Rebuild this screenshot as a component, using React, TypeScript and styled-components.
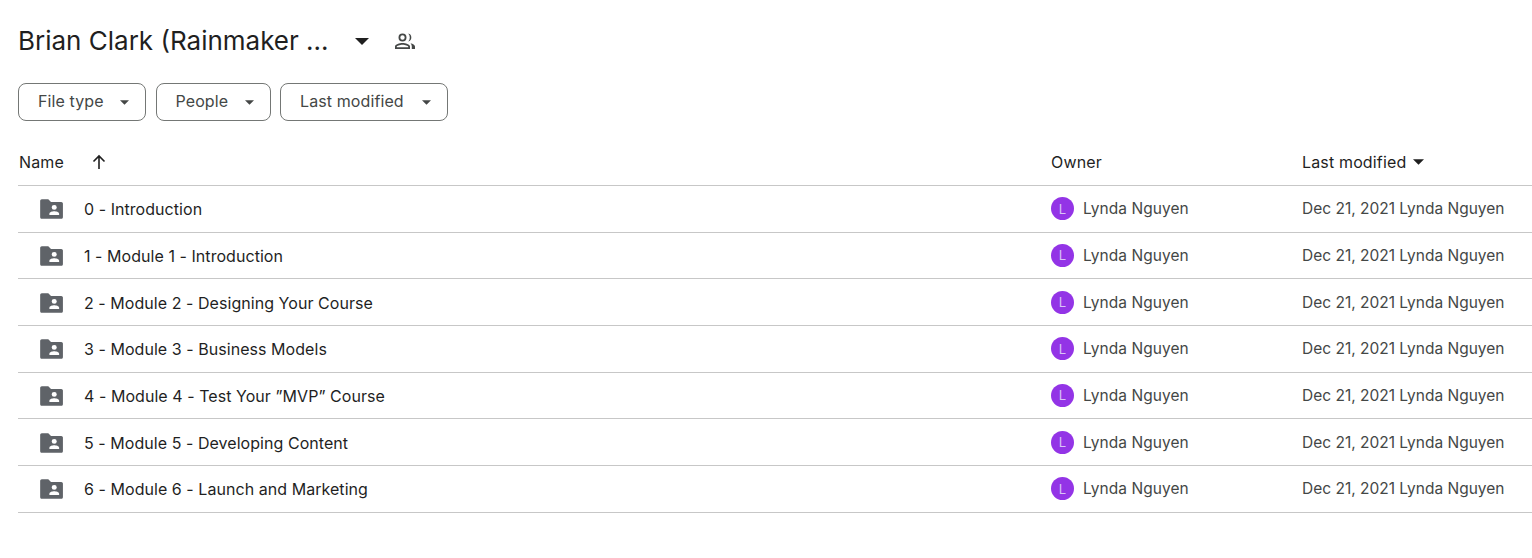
import React from "react";
import styled, { createGlobalStyle } from "styled-components";

const Global = createGlobalStyle`
  html, body { margin: 0; padding: 0; background: #fff; }
  body { font-family: Inter, Roboto, "Noto Sans", sans-serif; }
`;

const Page = styled.div`
  width: 1532px;
  height: 558px;
  box-sizing: border-box;
  padding: 18px 0 0 18px;
  overflow: hidden;
`;

const TitleBar = styled.div`
  display: flex;
  align-items: center;
  height: 46px;
`;

const Title = styled.h1`
  margin: 0;
  width: 337px;
  font-size: 26px;
  line-height: 46px;
  font-weight: 400;
  color: #1f1f1f;
  white-space: nowrap;
`;

const TitleCaret = styled.svg`
  width: 14px;
  height: 7px;
  fill: #1f1f1f;
`;

const PeopleIcon = styled.svg`
  width: 24px;
  height: 24px;
  margin-left: 24px;
  fill: #444746;
`;

const Filters = styled.div`
  display: flex;
  gap: 9.5px;
  margin-top: 19px;
`;

const Chip = styled.div<{ $width: number }>`
  box-sizing: border-box;
  width: ${(p) => p.$width}px;
  height: 38px;
  padding: 0 16px 2px 19px;
  border: 1px solid #747775;
  border-radius: 8px;
  display: flex;
  align-items: center;
  justify-content: space-between;
  font-size: 16px;
  letter-spacing: 0.1px;
  color: #444746;
`;

const ChipCaret = styled.svg`
  width: 9px;
  height: 5px;
  margin-top: 3px;
  fill: #444746;
`;

const Grid = styled.div`
  margin-top: 18px;
`;

const columns = `
  display: grid;
  grid-template-columns: 1033px 251px 1fr;
  align-items: center;
`;

const HeaderRow = styled.div`
  ${columns}
  height: 47px;
  box-sizing: border-box;
  border-bottom: 1px solid #c7c7c7;
  font-size: 16px;
  font-weight: 400;
  letter-spacing: 0.15px;
  color: #1f1f1f;
`;

const HeaderCell = styled.div`
  display: flex;
  align-items: center;
`;

const NameHeader = styled(HeaderCell)`
  padding-left: 1px;
  gap: 27px;
`;

const ArrowIcon = styled.svg`
  width: 16px;
  height: 16px;
  stroke: #1f1f1f;
  stroke-width: 1.6;
  fill: none;
`;

const SortCaret = styled.svg`
  width: 11px;
  height: 6px;
  margin-left: 7px;
  fill: #1f1f1f;
`;

const Row = styled.div`
  ${columns}
  height: 46.67px;
  box-sizing: border-box;
  border-bottom: 1px solid #c7c7c7;
`;

const NameCell = styled.div`
  display: flex;
  align-items: center;
  padding: 1px 0 0 20px;
  gap: 20px;
  font-size: 16px;
  font-weight: 400;
  letter-spacing: 0.05px;
  color: #1f1f1f;
`;

const FolderIcon = styled.svg`
  width: 26px;
  height: 26px;
  flex: none;
`;

const OwnerCell = styled.div`
  display: flex;
  align-items: center;
  gap: 9px;
  font-size: 15.5px;
  letter-spacing: 0.05px;
  color: #444746;
`;

const Avatar = styled.div`
  width: 23px;
  height: 23px;
  border-radius: 50%;
  background: #9334e6;
  color: #d9c2f5;
  font-size: 13px;
  display: flex;
  align-items: center;
  justify-content: center;
`;

const DateCell = styled.div`
  font-size: 15.5px;
  color: #444746;
  white-space: nowrap;
`;

const rows = [
  "0 - Introduction",
  "1 - Module 1 - Introduction",
  "2 - Module 2 - Designing Your Course",
  "3 - Module 3 - Business Models",
  "4 - Module 4 - Test Your ”MVP” Course",
  "5 - Module 5 - Developing Content",
  "6 - Module 6 - Launch and Marketing",
];

export default function App() {
  return (
    <Page>
      <Global />
      <TitleBar>
        <Title>Brian Clark (Rainmaker ...</Title>
        <TitleCaret viewBox="0 0 14 7"><path d="M0 0h14L7 7z" /></TitleCaret>
        <PeopleIcon viewBox="0 0 24 24">
          <path d="M9.5 12.5a4 4 0 1 0 0-8 4 4 0 0 0 0 8zm0-6.2a2.2 2.2 0 1 1 0 4.4 2.2 2.2 0 0 1 0-4.4zM9.5 14c-2.9 0-7.5 1.3-7.5 3.6V20h15v-2.4C17 15.3 12.4 14 9.500 14zm-5.700 4.200v-.6c0-.7 3-1.800 5.700-1.800s5.700 1.100 5.700 1.800v.6zM15.200 4.600a4 4 0 0 1 0 7.800 5.500 5.500 0 0 0 0-7.800zM17.500 14.200c2.400.5 4.500 1.600 4.500 3.400V20h-3.200v-2.400c0-1.400-.5-2.500-1.300-3.400z" />
        </PeopleIcon>
      </TitleBar>
      <Filters>
        <Chip $width={128}>File type<ChipCaret viewBox="0 0 10 5"><path d="M0 0h10L5 5z" /></ChipCaret></Chip>
        <Chip $width={115}>People<ChipCaret viewBox="0 0 10 5"><path d="M0 0h10L5 5z" /></ChipCaret></Chip>
        <Chip $width={168}>Last modified<ChipCaret viewBox="0 0 10 5"><path d="M0 0h10L5 5z" /></ChipCaret></Chip>
      </Filters>
      <Grid>
        <HeaderRow>
          <NameHeader>
            Name
            <ArrowIcon viewBox="0 0 16 16"><path d="M8 15V2M2.500 7.500 8 2l5.500 5.500" /></ArrowIcon>
          </NameHeader>
          <HeaderCell>Owner</HeaderCell>
          <HeaderCell>
            Last modified
            <SortCaret viewBox="0 0 12 6"><path d="M0 0h12L6 6z" /></SortCaret>
          </HeaderCell>
        </HeaderRow>
        {rows.map((name) => (
          <Row key={name}>
            <NameCell>
              <FolderIcon viewBox="0 0 24 24">
                <path fill="#5f6368" d="M2 4.500C2 3.700 2.700 3 3.500 3h6l2.500 2.500h9.500c.8 0 1.500.7 1.500 1.500v12.500c0 .8-.7 1.500-1.500 1.500h-18C2.700 21 2 20.300 2 19.500z" />
                <circle cx="15" cy="10.500" r="2.300" fill="#fff" />
                <path fill="#fff" d="M10.500 17.500v-1.200c0-1.600 3-2.300 4.500-2.300s4.500.7 4.500 2.300v1.200z" />
              </FolderIcon>
              {name}
            </NameCell>
            <OwnerCell>
              <Avatar>L</Avatar>
              Lynda Nguyen
            </OwnerCell>
            <DateCell>Dec 21, 2021 Lynda Nguyen</DateCell>
          </Row>
        ))}
      </Grid>
    </Page>
  );
}
